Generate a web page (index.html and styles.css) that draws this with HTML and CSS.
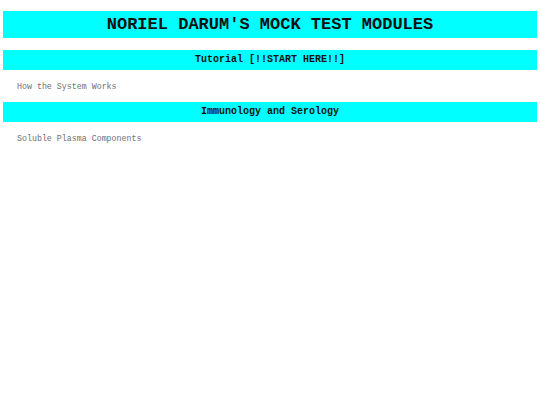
FILE: index.html
```html
<!DOCTYPE html>
<html>
<head>
<meta charset="utf-8">
<title>Mock Test Modules</title>
<link rel="stylesheet" href="styles.css">
</head>
<body>
<div class="page">
  <h1 class="title">NORIEL DARUM'S MOCK TEST MODULES</h1>
  <section class="group">
    <h2 class="group-head">Tutorial [!!START HERE!!]</h2>
    <a class="item" href="#">How the System Works</a>
  </section>
  <section class="group">
    <h2 class="group-head">Immunology and Serology</h2>
    <a class="item" href="#">Soluble Plasma Components</a>
  </section>
</div>
</body>
</html>
```
FILE: styles.css
```css
html, body {
  margin: 0;
  padding: 0;
  background: #ffffff;
}
.page {
  padding: 11px 3px;
  font-family: "Courier New", "Nimbus Mono PS", "Nimbus Mono L", FreeMono, Courier, "Liberation Mono", monospace;
  display: flex;
  flex-direction: column;
}
.title {
  margin: 0 0 12px;
  height: 27px;
  line-height: 27px;
  background: #00ffff;
  color: #111;
  font-size: 17px;
  font-weight: bold;
  text-align: center;
}
.group {
  display: flex;
  flex-direction: column;
}
.group-head {
  margin: 0;
  height: 20px;
  line-height: 20px;
  background: #00ffff;
  color: #111;
  font-size: 10px;
  font-weight: bold;
  text-align: center;
}
.item {
  display: block;
  height: 32px;
  line-height: 33px;
  padding-left: 14px;
  font-size: 8.3px;
  color: #707070;
  text-decoration: none;
}
```
